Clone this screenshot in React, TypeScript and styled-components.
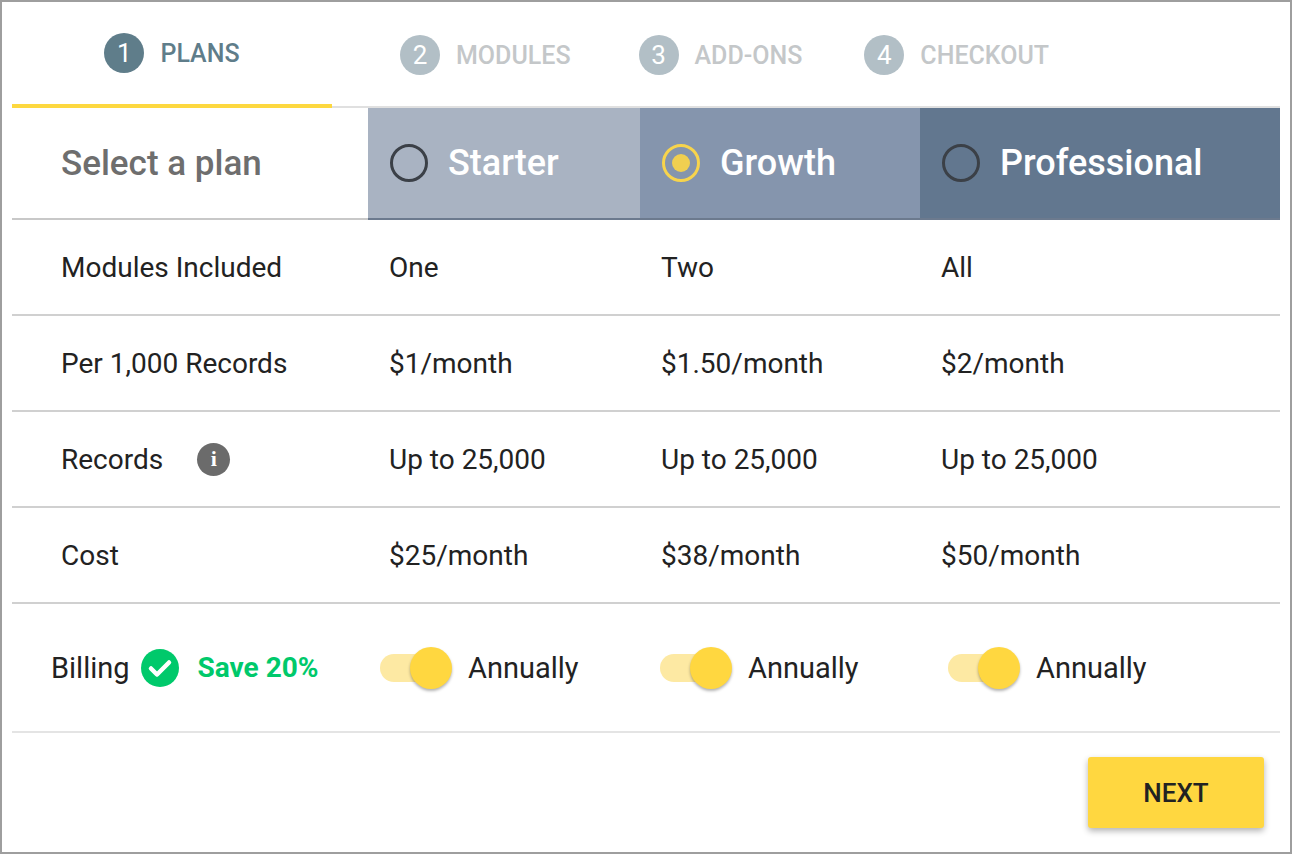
import React from "react";
import styled, { createGlobalStyle } from "styled-components";

const G = createGlobalStyle`
  html,body{margin:0;padding:0;background:#fff;font-family:Roboto,"Liberation Sans",sans-serif;}
`;
const Frame = styled.div`
  width:1292px;height:854px;box-sizing:border-box;border:2px solid #9e9e9e;border-top-width:2px;
  padding:0 10px;display:flex;flex-direction:column;
`;
const Tabs = styled.div`display:flex;height:104px;align-items:stretch;border-bottom:2px solid #e0e0e0;`;
const Tab = styled.div<{ $active?: boolean; $w?: number; $pl?: number }>`
  display:flex;align-items:center;justify-content:${p => (p.$active ? "center" : "flex-start")};
  gap:16px;width:${p => (p.$w ? p.$w + "px" : "auto")};padding-left:${p => p.$pl ?? 0}px;
  box-sizing:border-box;font-size:25px;font-weight:500;color:${p => (p.$active ? "#5f7d8a" : "#c4c7c9")};
  border-bottom:${p => (p.$active ? "4px solid #fdd83f" : "none")};margin-bottom:-2px;
`;
const Num = styled.span<{ $active?: boolean }>`
  width:40px;height:40px;border-radius:50%;display:flex;align-items:center;justify-content:center;
  background:${p => (p.$active ? "#5f7d8a" : "#b2bfc6")};color:#fff;font-size:26px;font-weight:400;
`;
const Grid = styled.div`display:grid;grid-template-columns:356px 272px 280px 360px;`;
const HeadLabel = styled.div`height:112px;display:flex;align-items:center;padding-left:49px;font-size:35px;font-weight:500;color:#6e6e6e;border-bottom:2px solid #c8c8c8;box-sizing:border-box;`;
const HeadPlan = styled.div<{ $bg: string }>`
  height:112px;display:flex;align-items:center;gap:20px;padding-left:22px;background:${p => p.$bg};
  color:#fff;font-size:36px;font-weight:500;box-sizing:border-box;border-bottom:2px solid #6c7a8e;
`;
const Radio = styled.span<{ $on?: boolean }>`
  width:38px;height:38px;border-radius:50%;box-sizing:border-box;
  border:3px solid ${p => (p.$on ? "#f7d44c" : "#3b4047")};display:flex;align-items:center;justify-content:center;
  &::after{content:"";width:18px;height:18px;border-radius:50%;background:${p => (p.$on ? "#f0cf50" : "transparent")};}
`;
const Cell = styled.div<{ $label?: boolean }>`
  height:96px;display:flex;align-items:center;padding-left:${p => (p.$label ? 49 : 21)}px;
  font-size:28px;color:#222;border-bottom:2px solid #d0d0d0;box-sizing:border-box;gap:34px;
`;
const Info = styled.span`
  width:33px;height:33px;border-radius:50%;background:#6b6b6b;color:#fff;font-size:22px;font-weight:700;
  display:flex;align-items:center;justify-content:center;font-family:"Liberation Serif",serif;
`;
const BillCell = styled.div<{ $label?: boolean; $pl: number }>`
  height:129px;display:flex;align-items:center;padding-left:${p => p.$pl}px;font-size:29px;color:#222;
  border-bottom:2px solid #e4e4e4;box-sizing:border-box;gap:${p => (p.$label ? 10 : 18)}px;
`;
const Save = styled.span`color:#00c96b;font-weight:700;font-size:28px;margin-left:8px;`;
const Track = styled.span`position:relative;width:70px;height:28px;border-radius:14px;background:#fde9a3;`;
const Thumb = styled.span`position:absolute;right:-2px;top:-7px;width:42px;height:42px;border-radius:50%;background:#ffd740;box-shadow:0 2px 3px rgba(0,0,0,.3);`;
const Footer = styled.div`flex:1;display:flex;justify-content:flex-end;align-items:flex-start;padding:24px 16px 0 0;`;
const Next = styled.button`
  width:176px;height:71px;background:#ffd740;border:none;border-radius:3px;font-family:Roboto,sans-serif;
  font-size:26px;font-weight:500;color:#222;box-shadow:0 3px 6px rgba(0,0,0,.3);
`;

const plans = [
  { n: "Starter", bg: "#a9b3c2", v: ["One", "$1/month", "Up to 25,000", "$25/month"], pl: 12 },
  { n: "Growth", bg: "#8595ad", on: true, v: ["Two", "$1.50/month", "Up to 25,000", "$38/month"], pl: 20 },
  { n: "Professional", bg: "#62778f", v: ["All", "$2/month", "Up to 25,000", "$50/month"], pl: 28 },
];
const labels = ["Modules Included", "Per 1,000 Records", "Records", "Cost"];

export default function App() {
  return (
    <Frame>
      <G />
      <Tabs>
        <Tab $active $w={320}><Num $active>1</Num>PLANS</Tab>
        <Tab $pl={68}><Num>2</Num>MODULES</Tab>
        <Tab $pl={68}><Num>3</Num>ADD-ONS</Tab>
        <Tab $pl={62}><Num>4</Num>CHECKOUT</Tab>
      </Tabs>
      <Grid>
        <HeadLabel>Select a plan</HeadLabel>
        {plans.map(p => (
          <HeadPlan key={p.n} $bg={p.bg}><Radio $on={p.on} />{p.n}</HeadPlan>
        ))}
        {labels.map((l, i) => (
          <React.Fragment key={l}>
            <Cell $label>{l}{l === "Records" && <Info>i</Info>}</Cell>
            {plans.map(p => <Cell key={p.n}>{p.v[i]}</Cell>)}
          </React.Fragment>
        ))}
        <BillCell $label $pl={39}>
          Billing
          <svg width="40" height="40" viewBox="0 0 40 40"><circle cx="20" cy="20" r="19" fill="#00c96b" /><path d="M11 20.5l6 6 12-12" stroke="#fff" strokeWidth="4.5" fill="none" strokeLinecap="round" strokeLinejoin="round" /></svg>
          <Save>Save 20%</Save>
        </BillCell>
        {plans.map(p => (
          <BillCell key={p.n} $pl={p.pl}><Track><Thumb /></Track>Annually</BillCell>
        ))}
      </Grid>
      <Footer><Next>NEXT</Next></Footer>
    </Frame>
  );
}
